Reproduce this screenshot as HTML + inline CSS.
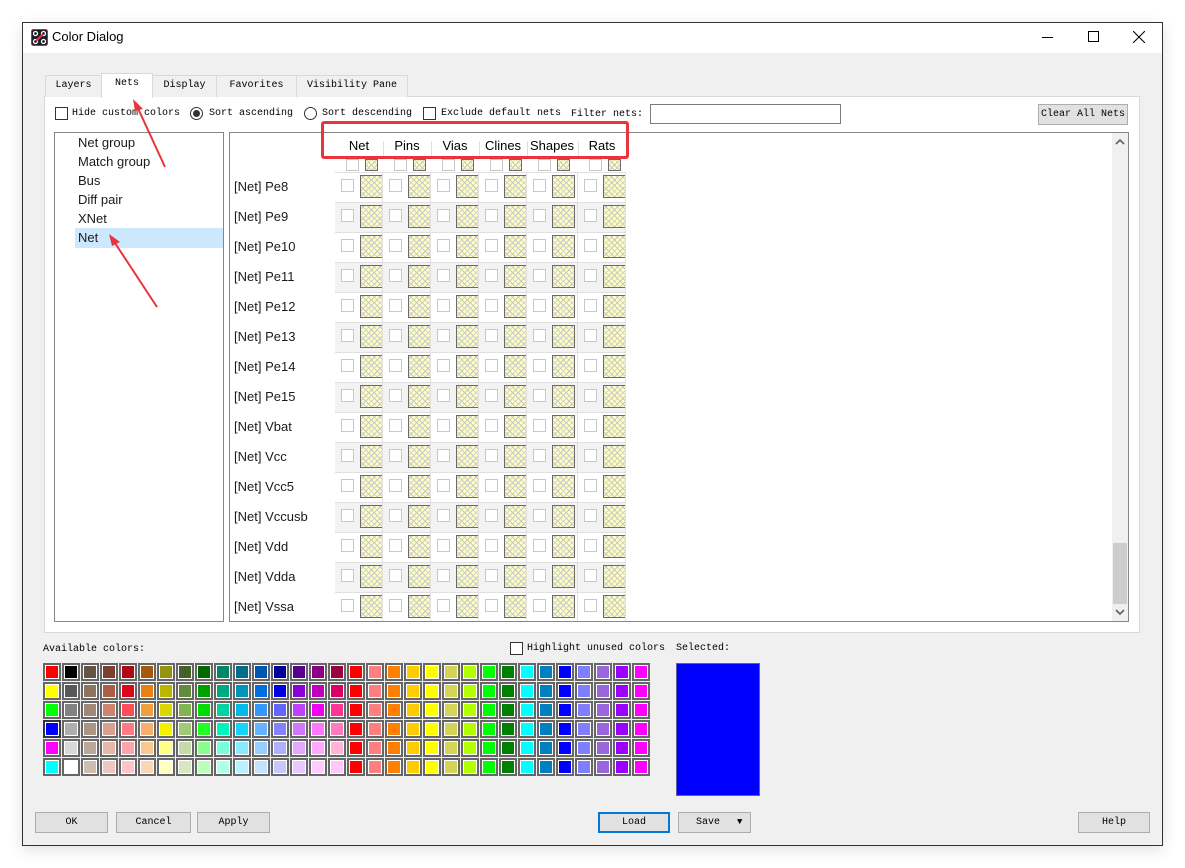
<!DOCTYPE html>
<html><head><meta charset="utf-8">
<style>
*{box-sizing:border-box;margin:0;padding:0}
body{width:1185px;height:868px;background:#fff;position:relative;overflow:hidden;font-family:"Liberation Mono","Noto Sans CJK SC",monospace;font-size:10px;color:#000}
.a{position:absolute;white-space:nowrap}
.win{left:22px;top:22px;width:1141px;height:824px;border:1px solid #333;background:#f0f0f0;box-shadow:0 4px 14px rgba(0,0,0,.12)}
.title{left:23px;top:23px;width:1139px;height:30px;background:#fff}
.sans{font-family:"Liberation Sans","Noto Sans CJK SC",sans-serif}
.tab{top:75px;height:22px;border:1px solid #d9d9d9;border-bottom:none;background:#f0f0f0;text-align:center;line-height:20px;font-size:10px}
.panel{left:44px;top:96px;width:1096px;height:537px;background:#fff;border:1px solid #d9d9d9}
.cb{width:13px;height:13px;border:1px solid #333;background:#fff}
.btn{height:21px;border:1px solid #adadad;background:#e1e1e1;text-align:center;line-height:19px;font-size:10px}
.list{left:54px;top:132px;width:170px;height:490px;border:1px solid #828790;background:#fff}
.grid{left:229px;top:132px;width:900px;height:490px;border:1px solid #828790;background:#fff;overflow:hidden}
.lbl{font-size:13px;color:#1a1a1a}
.sw{width:23px;height:23px;border:1px solid #6b6b6b;background-color:#ffffc0;background-image:repeating-linear-gradient(45deg,transparent 0 3px,#c8c8c8 3px 4px),repeating-linear-gradient(-45deg,transparent 0 3px,#c8c8c8 3px 4px)}
.ck{width:13px;height:13px;border:1px solid #c8c8c8;background:#fff}
.pc{width:18px;height:18px;border:2px solid #666;padding:1px;background:#fff}
.pc i{display:block;width:12px;height:12px}
.t{font-size:10px}
</style></head><body>
<div class="a win"></div>
<div class="a title"></div>
<svg class="a" style="left:31px;top:29px" width="17" height="17" viewBox="0 0 17 17"><rect x="0.5" y="0.5" width="16" height="16" rx="2" fill="#1b1b2a" stroke="#d22" /><circle cx="4.5" cy="4.5" r="2" fill="none" stroke="#fff" stroke-width="1.3"/><circle cx="12.5" cy="4.5" r="2" fill="none" stroke="#fff" stroke-width="1.3"/><circle cx="4.5" cy="12.5" r="2" fill="none" stroke="#fff" stroke-width="1.3"/><circle cx="12.5" cy="12.5" r="2" fill="none" stroke="#fff" stroke-width="1.3"/><line x1="5" y1="12" x2="12" y2="5" stroke="#e33" stroke-width="2"/></svg>
<div class="a sans" style="left:52px;top:29px;font-size:13px">Color Dialog</div>
<div class="a" style="left:1042px;top:37px;width:11px;height:1px;background:#000"></div>
<div class="a" style="left:1088px;top:31px;width:11px;height:11px;border:1px solid #000"></div>
<svg class="a" style="left:1133px;top:31px" width="12" height="12"><path d="M0 0L12 12M12 0L0 12" stroke="#000" stroke-width="1.1"/></svg>

<div class="a panel"></div>
<div class="a tab" style="left:45px;width:57px">Layers</div>
<div class="a tab" style="left:101px;top:73px;height:25px;width:52px;background:#fff;z-index:2">Nets</div>
<div class="a tab" style="left:152px;width:65px">Display</div>
<div class="a tab" style="left:216px;width:81px">Favorites</div>
<div class="a tab" style="left:296px;width:112px">Visibility Pane</div>

<div class="a cb" style="left:55px;top:107px"></div>
<div class="a t" style="left:72px;top:108px">Hide custom colors</div>
<div class="a" style="left:190px;top:107px;width:13px;height:13px;border:1px solid #333;border-radius:50%;background:#fff"><div style="margin:2px;width:7px;height:7px;border-radius:50%;background:#333"></div></div>
<div class="a t" style="left:209px;top:108px">Sort ascending</div>
<div class="a" style="left:304px;top:107px;width:13px;height:13px;border:1px solid #333;border-radius:50%;background:#fff"></div>
<div class="a t" style="left:322px;top:108px">Sort descending</div>
<div class="a cb" style="left:423px;top:107px"></div>
<div class="a t" style="left:441px;top:108px">Exclude default nets</div>
<div class="a t" style="left:571px;top:109px">Filter nets:</div>
<div class="a" style="left:650px;top:104px;width:191px;height:20px;border:1px solid #7a7a7a;background:#fff"></div>
<div class="a btn" style="left:1038px;top:104px;width:90px">Clear All Nets</div>

<div class="a list sans">
<div class="a lbl" style="left:23px;top:2px">Net group</div>
<div class="a lbl" style="left:23px;top:21px">Match group</div>
<div class="a lbl" style="left:23px;top:40px">Bus</div>
<div class="a lbl" style="left:23px;top:59px">Diff pair</div>
<div class="a lbl" style="left:23px;top:78px">XNet</div>
<div class="a" style="left:20px;top:95px;width:148px;height:20px;background:#cce8ff"></div>
<div class="a lbl" style="left:23px;top:97px">Net</div>
</div>

<div class="a grid sans" id="grid">
<div class="a" style="left:116px;top:5px;font-size:13px;width:26px;text-align:center">Net</div>
<div class="a" style="left:153px;top:5px;font-size:13px;width:48px;text-align:center">Pins</div>
<div class="a" style="left:201px;top:5px;font-size:13px;width:48px;text-align:center">Vias</div>
<div class="a" style="left:249px;top:5px;font-size:13px;width:48px;text-align:center">Clines</div>
<div class="a" style="left:297px;top:5px;font-size:13px;width:50px;text-align:center">Shapes</div>
<div class="a" style="left:347px;top:5px;font-size:13px;width:50px;text-align:center">Rats</div>
<div class="a lbl" style="left:4px;top:46px">[Net] Pe8</div>
<div class="a lbl" style="left:4px;top:76px">[Net] Pe9</div>
<div class="a lbl" style="left:4px;top:106px">[Net] Pe10</div>
<div class="a lbl" style="left:4px;top:136px">[Net] Pe11</div>
<div class="a lbl" style="left:4px;top:166px">[Net] Pe12</div>
<div class="a lbl" style="left:4px;top:196px">[Net] Pe13</div>
<div class="a lbl" style="left:4px;top:226px">[Net] Pe14</div>
<div class="a lbl" style="left:4px;top:256px">[Net] Pe15</div>
<div class="a lbl" style="left:4px;top:286px">[Net] Vbat</div>
<div class="a lbl" style="left:4px;top:316px">[Net] Vcc</div>
<div class="a lbl" style="left:4px;top:346px">[Net] Vcc5</div>
<div class="a lbl" style="left:4px;top:376px">[Net] Vccusb</div>
<div class="a lbl" style="left:4px;top:406px">[Net] Vdd</div>
<div class="a lbl" style="left:4px;top:436px">[Net] Vdda</div>
<div class="a lbl" style="left:4px;top:466px">[Net] Vssa</div>
<div class="a" style="left:882px;top:0;width:16px;height:490px;background:#f0f0f0"></div>
<div class="a" style="left:883px;top:410px;width:14px;height:61px;background:#cdcdcd"></div>
<svg class="a" style="left:885px;top:5px" width="10" height="8"><path d="M1 6L5 2L9 6" stroke="#606060" stroke-width="1.6" fill="none"/></svg>
<svg class="a" style="left:885px;top:475px" width="10" height="8"><path d="M1 2L5 6L9 2" stroke="#606060" stroke-width="1.6" fill="none"/></svg>
</div>

<div class="a t" style="left:43px;top:644px">Available colors:</div>
<div class="a cb" style="left:510px;top:642px"></div>
<div class="a t" style="left:527px;top:643px">Highlight unused colors</div>
<div class="a t" style="left:676px;top:643px">Selected:</div>
<div id="pal"></div>
<div class="a" style="left:676px;top:663px;width:84px;height:133px;background:#0000ff;border:1px solid #6060a0"></div>

<div class="a btn" style="left:35px;top:812px;width:73px">OK</div>
<div class="a btn" style="left:116px;top:812px;width:75px">Cancel</div>
<div class="a btn" style="left:197px;top:812px;width:73px">Apply</div>
<div class="a btn" style="left:598px;top:812px;width:72px;border:2px solid #0078d7;line-height:17px">Load</div>
<div class="a btn" style="left:678px;top:812px;width:73px;text-align:left;padding-left:17px">Save <span style="position:absolute;left:58px;font-size:9px">&#9660;</span></div>
<div class="a btn" style="left:1078px;top:812px;width:72px">Help</div>

<div class="a" style="left:321px;top:121px;width:308px;height:38px;border:3px solid #e8343a;border-radius:3px"></div>
<svg class="a" style="left:0;top:0" width="400" height="320">
<path d="M165 167L136 104" stroke="#e8343a" stroke-width="2" fill="none"/><path d="M133 99L143 109L135 111Z" fill="#e8343a"/>
<path d="M157 307L113 240" stroke="#e8343a" stroke-width="2" fill="none"/><path d="M109 234L120 242L112 246Z" fill="#e8343a"/>
</svg>

<script>
var g=document.getElementById('grid'),h='';
var cx=[105,153,201,249,297,348,396];
for(var c=1;c<6;c++)h+='<div class="a" style="left:'+cx[c]+'px;top:8px;width:1px;height:17px;background:#e0e0e0"></div>';
for(var c=0;c<6;c++){h+='<div class="a ck" style="left:'+(cx[c]+11)+'px;top:26px;height:12px"></div><div class="a sw" style="left:'+(cx[c]+30)+'px;top:26px;width:13px;height:12px"></div>';}
for(var r=0;r<15;r++){var y=40+r*30;
 if(r%2==1)h+='<div class="a" style="left:105px;top:'+(y-1)+'px;width:291px;height:30px;background:#f3f3f3"></div>';
 h+='<div class="a" style="left:105px;top:'+(y-1)+'px;width:291px;height:1px;background:#e0e0e0"></div>';
 for(var c=0;c<6;c++){h+='<div class="a ck" style="left:'+(cx[c]+6)+'px;top:'+(y+6)+'px"></div><div class="a sw" style="left:'+(cx[c]+25)+'px;top:'+(y+2)+'px"></div>';
  h+='<div class="a" style="left:'+(cx[c+1]-1)+'px;top:'+(y-1)+'px;width:1px;height:30px;background:#e0e0e0"></div>';}
}
g.insertAdjacentHTML('beforeend',h);
var rows=[
["ff0000","000000","635444","7b4030","ab0717","a45a0e","939412","45612a","006a00","00876a","006d8a","0056b0","000099","5b008a","8b0085","9b0040"],
["ffff00","585858","8b7462","ab5e44","d9091b","e58213","b9b600","648a3b","009f00","00aa7f","0094bb","006edf","0000e5","8b00d7","bf00be","da0065"],
["00ff00","828282","a08878","cc8570","ff4c59","f09e40","d9d600","83b54e","00dd00","00d59f","00bbe9","3397ff","6464ff","bf40ff","f000f0","ff3595"],
["0000ff","aeaeae","ab9584","d9a08d","ff7b84","f5b06b","f2f200","a0c978","23ff23","00f5b8","12d5ff","66b3ff","8383ff","d176ff","ff76ff","ff7bbc"],
["ff00ff","d8d8d8","bba89b","e6b8aa","ffa3aa","f9c88f","ffff88","c4dba8","88ff88","77ffdb","88e9ff","99ccff","b0b0ff","e2a8ff","ffa8ff","ffb3d9"],
["00ffff","ffffff","cdbdac","ecc8c0","ffc3c8","fad7b6","ffffc0","d7e6c3","bcffbc","b0ffe7","b8f1ff","c4e1ff","c8c8ff","e9c7ff","ffccff","ffc8f8"]];
var tail=["ff0000","ff7f7f","ff8000","ffcc00","ffff00","d4d45a","b3ff00","00ff00","008000","00ffff","0080c0","0000ff","7f7fff","9966dd","9900ff","ff00ff"];
var p='';
for(var j=0;j<6;j++){var cols=rows[j].concat(tail);for(var i=0;i<32;i++){
 p+='<div class="a pc" style="left:'+(43+19*i)+'px;top:'+(663+19*j)+'px'+(j==3&&i==0?';border-color:#334':'')+'"><i style="background:#'+cols[i]+'"></i></div>';}}
document.getElementById('pal').innerHTML=p;
</script>
</body></html>
